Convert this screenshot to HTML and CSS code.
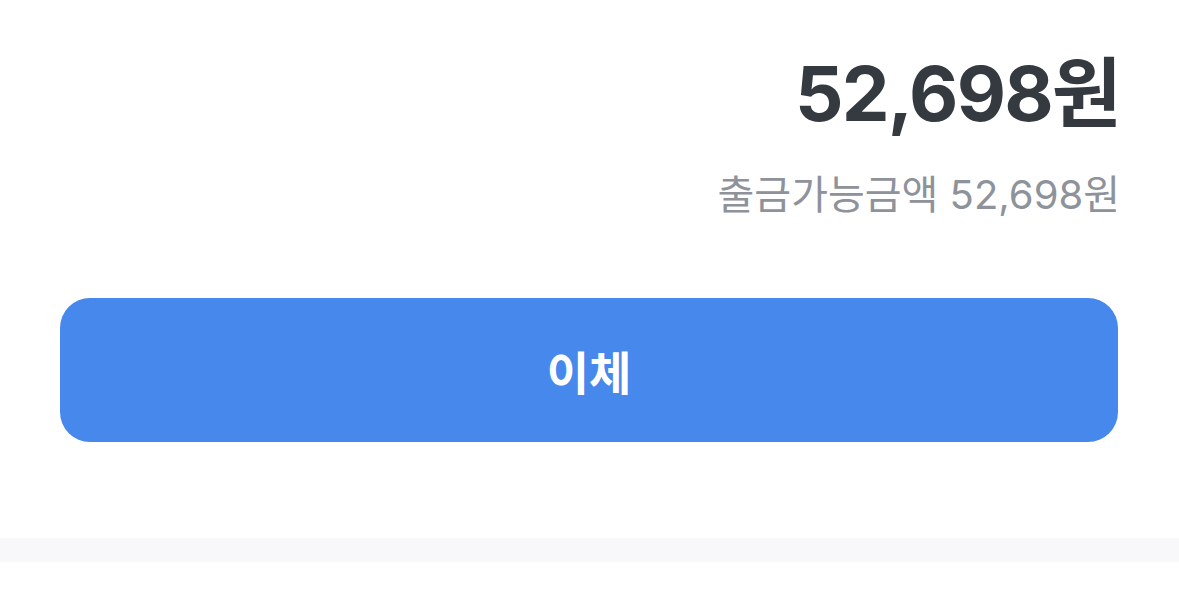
FILE: index.html
```html
<!DOCTYPE html>
<html lang="ko">
<head>
<meta charset="utf-8">
<link rel="stylesheet" href="styles.css">
</head>
<body>
<main class="panel">
  <section class="balance">
    <div class="amount">52,698원</div>
    <div class="available">출금가능금액 52,698원</div>
  </section>
  <button class="transfer">이체</button>
</main>
<div class="divider"></div>
</body>
</html>
```
FILE: styles.css
```css
html, body {
  margin: 0;
  padding: 0;
  background: #ffffff;
}
body {
  font-family: Inter, "Noto Sans CJK KR", sans-serif;
}
.panel {
  padding: 48px 61px 96px 60px;
  display: flex;
  flex-direction: column;
}
.balance {
  display: flex;
  flex-direction: column;
  align-items: flex-end;
}
.amount {
  font-size: 76px;
  font-weight: 700;
  color: #343a40;
  line-height: 90px;
  letter-spacing: -1.8px;
  margin-right: -2px;
}
.available {
  margin-top: 31px;
  font-size: 40px;
  color: #8e929a;
  line-height: 52px;
  letter-spacing: 0;
  margin-right: -2px;
}
.transfer {
  margin-top: 77px;
  height: 144px;
  border: none;
  border-radius: 30px;
  background: #4788ec;
  color: #ffffff;
  font-family: "Noto Sans CJK KR", sans-serif;
  font-size: 46px;
  font-weight: 700;
  padding: 0;
}
.divider {
  height: 24px;
  background: #f8f8fa;
}
```
